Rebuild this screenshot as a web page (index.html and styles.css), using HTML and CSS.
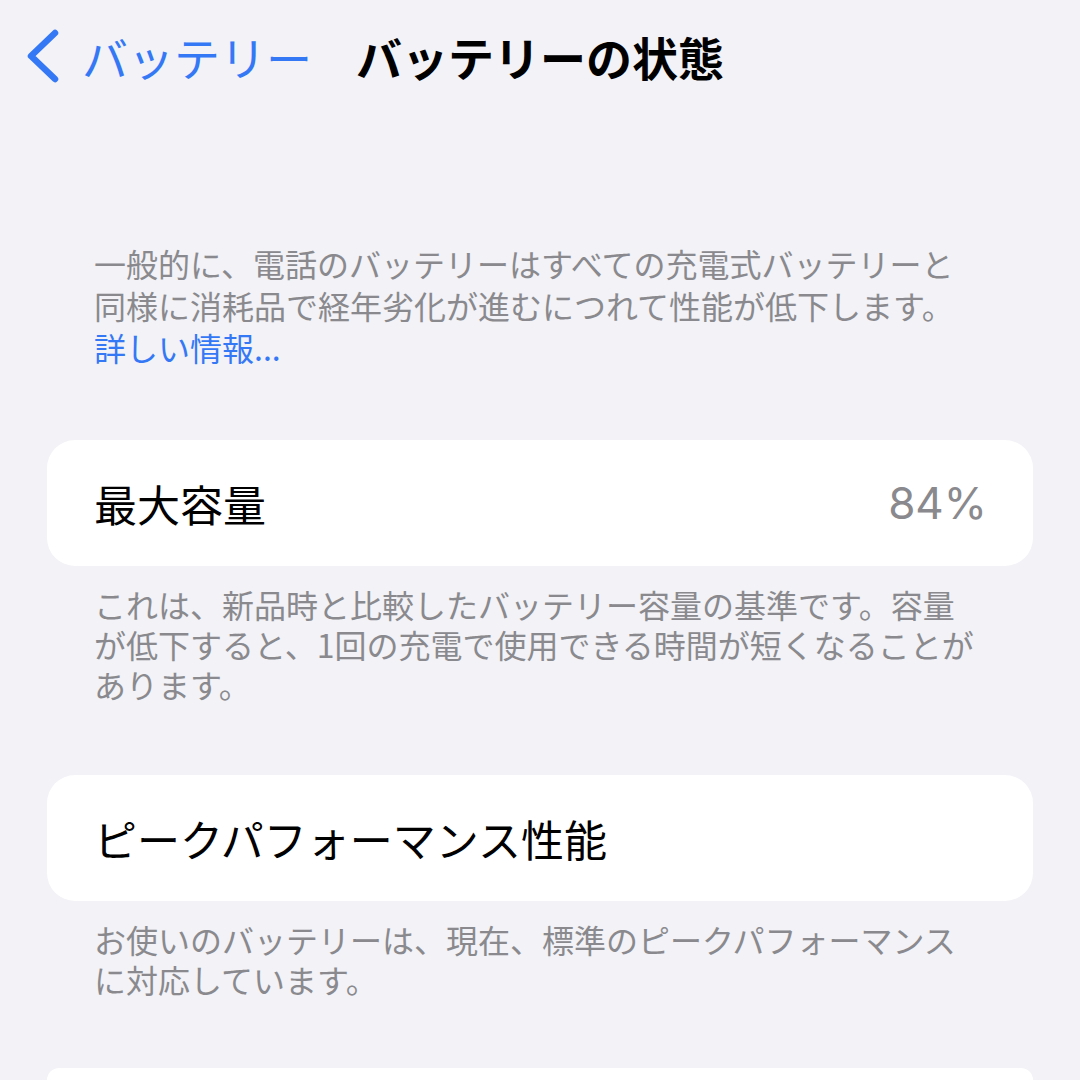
FILE: index.html
```html
<!DOCTYPE html>
<html lang="ja">
<head>
    <meta charset="UTF-8">
    <title>バッテリーの状態</title>
    <link rel="stylesheet" href="styles.css">
</head>
<body>

    <header class="navbar">
        <a class="back" href="#">
            <svg class="chevron" width="36" height="56" viewBox="0 0 36 56">
                <path d="M29 5 L5 28 L29 51" fill="none" stroke="currentColor" stroke-width="6.5" stroke-linecap="round" stroke-linejoin="round"/>
            </svg>
            <span>バッテリー</span>
        </a>
        <h1 class="title">バッテリーの状態</h1>
        <div></div>
    </header>

    <p class="intro">
        一般的に、電話のバッテリーはすべての充電式バッテリーと同様に消耗品で経年劣化が進むにつれて性能が低下します。
        <a class="link" href="#">詳しい情報...</a>
    </p>

    <div class="card">
        <span class="label">最大容量</span>
        <span class="value">84%</span>
    </div>
    <p class="caption">これは、新品時と比較したバッテリー容量の基準です。容量が低下すると、1回の充電で使用できる時間が短くなることがあります。</p>

    <div class="card">
        <span class="label">ピークパフォーマンス性能</span>
    </div>
    <p class="caption">お使いのバッテリーは、現在、標準のピークパフォーマンスに対応しています。</p>

    <div class="card card-cut"></div>

</body>
</html>
```

FILE: styles.css
```css
body {
    margin: 0;
    background: #f2f2f7;
    font-family: "Noto Sans CJK JP", "Noto Sans", sans-serif;
    color: #000;
    height: 1080px;
    overflow: hidden;
}
/* Top navigation */
.navbar {
    display: grid;
    grid-template-columns: 1fr auto 1fr;
    align-items: center;
    height: 112px;
}
.back {
    display: flex;
    align-items: center;
    gap: 20px;
    padding-left: 26px;
    color: #3478f6;
    text-decoration: none;
    font-size: 46px;
    white-space: nowrap;
}
.title {
    margin: 0;
    font-size: 46px;
    font-weight: 700;
    line-height: 1;
}
/* Footer texts */
.intro, .caption {
    margin: 0;
    padding: 0 94px;
    font-size: 32px;
    line-height: 42px;
    color: #8a8a8e;
}
.intro {
    margin-top: 130px;
    padding-right: 116px;
}
.link {
    display: block;
    color: #3478f6;
    text-decoration: none;
}
.caption {
    margin-top: 18px;
    line-height: 40px;
}
/* Grouped cells */
.card {
    display: flex;
    align-items: center;
    justify-content: space-between;
    margin: 71px 47px 0;
    height: 126px;
    padding: 0 46px 0 47px;
    background: #fff;
    border-radius: 28px;
}
.label {
    font-size: 43px;
}
.value {
    font-size: 44px;
    color: #8a8a8e;
    font-family: "Inter", "Noto Sans", sans-serif;
}
.card:first-of-type {
    margin-top: 72px;
}
.card-cut {
    margin-top: 69px;
    height: 12px;
    border-radius: 28px 28px 0 0;
}
```
